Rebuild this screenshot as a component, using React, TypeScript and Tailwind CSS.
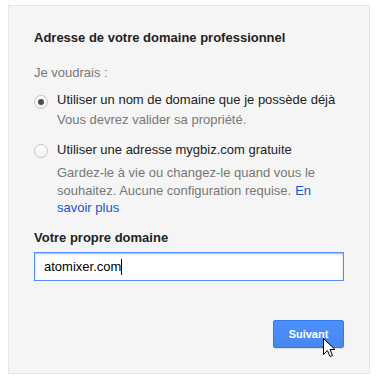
import React from "react";

function Radio({ checked }: { checked: boolean }) {
  return (
    <div className="w-[14px] h-[14px] rounded-full border border-[#c8c8c8] bg-gradient-to-b from-[#ffffff] to-[#f1f1f1] flex items-center justify-center shrink-0">
      {checked && <div className="w-[6px] h-[6px] rounded-full bg-[#4d4d4d]" />}
    </div>
  );
}

export default function App() {
  return (
    <div
      className="relative w-[378px] h-[378px] bg-white pt-[5px] pl-[8px]"
      style={{ fontFamily: '"Liberation Sans", Arial, sans-serif' }}
    >
      <div className="w-[362px] h-[369px] border border-[#e5e5e5] bg-[#f5f5f5] px-[25px] pt-[24px] flex flex-col">
        <h1 className="text-[13px] leading-[16px] font-bold text-[#222222]">
          Adresse de votre domaine professionnel
        </h1>
        <p className="mt-[19px] text-[13px] leading-[16px] text-[#777777]">Je voudrais :</p>

        <div className="mt-[11px] flex items-start gap-[9px]">
          <div className="mt-[3px]">
            <Radio checked />
          </div>
          <div className="flex flex-col">
            <span className="text-[13px] leading-[16px] text-[#222222]">
              Utiliser un nom de domaine que je possède déjà
            </span>
            <span className="mt-[4px] text-[13px] leading-[16px] text-[#777777]">
              Vous devrez valider sa propriété.
            </span>
          </div>
        </div>

        <div className="mt-[14px] flex items-start gap-[9px]">
          <div className="mt-[2px]">
            <Radio checked={false} />
          </div>
          <div className="flex flex-col">
            <span className="text-[13px] leading-[16px] text-[#222222]">
              Utiliser une adresse mygbiz.com gratuite
            </span>
            <div className="mt-[6px] flex flex-col text-[13px] leading-[17.5px] text-[#777777]">
              <span>Gardez-le à vie ou changez-le quand vous le</span>
              <div className="flex gap-[4px]">
                <span>souhaitez. Aucune configuration requise.</span>
                <a className="text-[#1155cc]">En</a>
              </div>
              <a className="text-[#1155cc]">savoir plus</a>
            </div>
          </div>
        </div>

        <label className="mt-[13.5px] text-[13px] leading-[16px] font-bold text-[#222222]">
          Votre propre domaine
        </label>
        <div className="mt-[6px] h-[29px] w-[310px] border border-[#4d90fe] bg-white shadow-[inset_0_1px_2px_rgba(0,0,0,0.3)] flex items-center pl-[9px]">
          <span className="text-[13px] leading-[16px] text-[#000000]">atomixer.com</span>
          <span className="w-[1px] h-[16px] bg-black" />
        </div>

        <div className="mt-[39px] flex justify-end">
          <button className="w-[71px] h-[28px] rounded-[2px] border border-[#3079ed] bg-gradient-to-b from-[#4d90fe] to-[#4787ed] text-white text-[11px] font-bold flex items-center justify-center shadow-[0_1px_1px_rgba(0,0,0,0.1)]">
            Suivant
          </button>
        </div>
      </div>

      <svg
        className="absolute left-[323px] top-[338px]"
        width="13"
        height="20"
        viewBox="0 0 13 20"
      >
        <path
          d="M0.5 0.5 L0.5 16.5 L4.5 12.5 L7 18.5 L9.5 17.5 L7 11.5 L12 11.5 Z"
          fill="white"
          stroke="black"
          strokeWidth="1"
          strokeLinejoin="miter"
        />
      </svg>
    </div>
  );
}
